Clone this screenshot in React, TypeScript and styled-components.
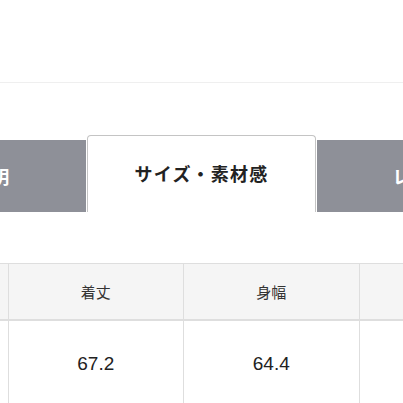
import styled, {createGlobalStyle} from "styled-components";

const GlobalStyle = createGlobalStyle`
  html, body {
    margin: 0;
    padding: 0;
    background: #fff;
  }
  body {
    font-family: "Liberation Sans", "Noto Sans CJK JP", sans-serif;
    color: #333;
  }
`;

const Page = styled.div`
  width: 403px;
  height: 403px;
  overflow: hidden;
  background: #fff;
`;

const TopArea = styled.div`
  height: 82px;
  border-bottom: 1px solid #efefef;
`;

const TabBar = styled.div`
  display: flex;
  align-items: flex-end;
  gap: 1px;
  margin: 52px 0 0 -142px;
  height: 77px;
`;

const Tab = styled.div<{ $active?: boolean }>`
  flex: none;
  width: ${({$active}) => ($active ? "229px" : "228px")};
  height: ${({$active}) => ($active ? "77px" : "72px")};
  box-sizing: border-box;
  display: flex;
  align-items: center;
  justify-content: center;
  font-family: "Noto Sans CJK JP", sans-serif;
  font-size: 18px;
  font-weight: 700;
  letter-spacing: 1.2px;
  padding-bottom: ${({$active}) => ($active ? "2px" : "0")};
  color: ${({$active}) => ($active ? "#222" : "#fff")};
  background: ${({$active}) => ($active ? "#fff" : "#8e9098")};
  border: ${({$active}) => ($active ? "1px solid #c4c4c4" : "none")};
  border-bottom: none;
  border-radius: ${({$active}) => ($active ? "4px 4px 0 0" : "0")};
`;

const SizeTable = styled.table`
  width: 703px;
  margin: 51px 0 0 -168px;
  border-collapse: collapse;
  table-layout: fixed;
`;

const HeadCell = styled.th`
  height: 55px;
  padding: 0;
  background: #f5f5f5;
  border: 1px solid #dedede;
  font-family: "Noto Sans CJK JP", sans-serif;
  font-size: 15px;
  font-weight: 400;
  color: #333;
  text-align: center;
`;

const ValueCell = styled.td`
  height: 85px;
  padding: 0;
  border: 1px solid #dedede;
  border-top-width: 2px;
  font-family: "Liberation Sans", sans-serif;
  font-size: 19px;
  color: #222;
  text-align: center;
`;

const tabs = ["商品説明", "サイズ・素材感", "レビュー"];

const columns = [
    {label: "サイズ", value: "M"},
    {label: "着丈", value: "67.2"},
    {label: "身幅", value: "64.4"},
    {label: "肩幅", value: "55.0"},
];

const App = () => {
    return (
        <Page>
            <GlobalStyle/>
            <TopArea/>
            <TabBar>
                {tabs.map((name, index) => (
                    <Tab key={name} $active={index === 1}>{name}</Tab>
                ))}
            </TabBar>
            <SizeTable>
                <thead>
                <tr>
                    {columns.map(({label}) => <HeadCell key={label}>{label}</HeadCell>)}
                </tr>
                </thead>
                <tbody>
                <tr>
                    {columns.map(({label, value}) => <ValueCell key={label}>{value}</ValueCell>)}
                </tr>
                </tbody>
            </SizeTable>
        </Page>
    );
};

export default App;
